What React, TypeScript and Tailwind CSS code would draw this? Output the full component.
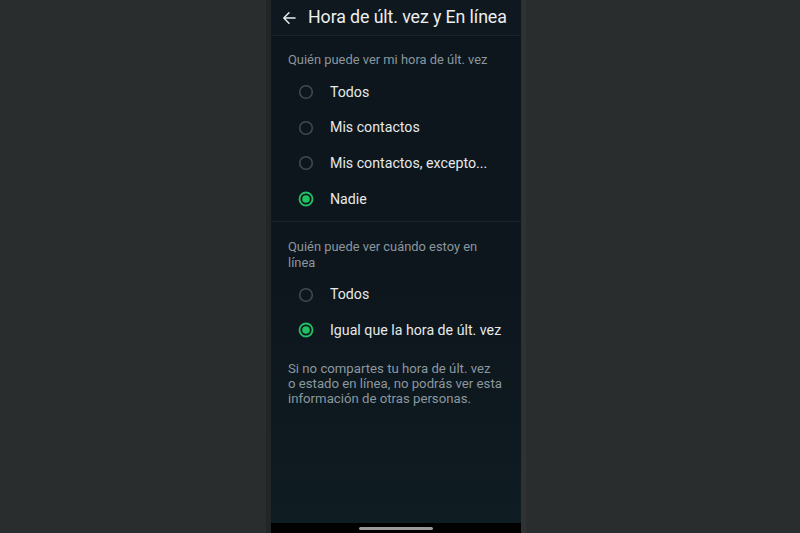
import React from "react";

type Opt = { label: string; checked?: boolean };

function Radio({ checked }: { checked?: boolean }) {
  return (
    <svg width="16" height="16" viewBox="0 0 16 16" className="shrink-0">
      {checked ? (
        <>
          <circle cx="8" cy="8" r="6.5" fill="none" stroke="#21c063" strokeWidth="1.8" />
          <circle cx="8" cy="8" r="3.8" fill="#21c063" />
        </>
      ) : (
        <circle cx="8" cy="8" r="6.3" fill="none" stroke="#3e4a51" strokeWidth="1.6" />
      )}
    </svg>
  );
}

function OptionRow({ label, checked }: Opt) {
  return (
    <div className="flex h-[35.7px] items-center">
      <div className="flex w-[59px] pl-[27px]">
        <Radio checked={checked} />
      </div>
      <span className="text-[14.2px] leading-none text-[#e6e9ea]">{label}</span>
    </div>
  );
}

export default function App() {
  const font = { fontFamily: "Roboto, 'Noto Sans', sans-serif" };
  const first: Opt[] = [
    { label: "Todos" },
    { label: "Mis contactos" },
    { label: "Mis contactos, excepto..." },
    { label: "Nadie", checked: true },
  ];
  const second: Opt[] = [
    { label: "Todos" },
    { label: "Igual que la hora de últ. vez", checked: true },
  ];

  return (
    <div className="flex h-[533px] w-[800px] bg-[#2a2d2e] pl-[266px]" style={font}>
      <div className="w-[5px] bg-[#232628]" />
      <div className="flex w-[250px] flex-col bg-[#0d161c]">
        {/* top bar */}
        <div className="flex h-[36px] items-center border-b border-[#1a242a] bg-[#0f181e]">
          <svg width="14" height="14" viewBox="0 0 14 14" className="ml-[11px]">
            <path
              d="M13 7H2M7 1.8L1.8 7L7 12.2"
              fill="none"
              stroke="#e8eaeb"
              strokeWidth="1.5"
              strokeLinecap="round"
              strokeLinejoin="round"
            />
          </svg>
          <span className="ml-[12px] -mt-[1px] text-[17.8px] leading-none tracking-[-0.1px] text-[#eceeef]">
            Hora de últ. vez y En línea
          </span>
        </div>

        {/* content */}
        <div className="flex flex-1 flex-col bg-gradient-to-b from-[#0d161c] via-[#0d161c] to-[#0f1c22]">
          <div className="border-b border-[#19232a] pb-[4px] pt-[16px]">
            <div className="px-[17px] text-[12.9px] leading-[16px] text-[#8b979e]">
              Quién puede ver mi hora de últ. vez
            </div>
            <div className="mt-[6px]">
              {first.map((o) => (
                <OptionRow key={o.label} {...o} />
              ))}
            </div>
          </div>

          <div className="pt-[17px]">
            <div className="pl-[17px] pr-[18px] text-[12.9px] leading-[16px] text-[#8b979e]">
              Quién puede ver cuándo estoy en línea
            </div>
            <div className="mt-[6px]">
              {second.map((o) => (
                <OptionRow key={o.label} {...o} />
              ))}
            </div>
          </div>

          <p className="mt-[13px] pl-[17px] pr-[6px] text-[13.2px] leading-[15px] text-[#8b979e]">
            Si no compartes tu hora de últ. vez
            <br />
            o estado en línea, no podrás ver esta
            <br />
            información de otras personas.
          </p>
        </div>

        {/* system nav bar */}
        <div className="flex h-[10px] items-center justify-center bg-black">
          <div className="h-[3px] w-[74px] rounded-full bg-[#9a9a9a]" />
        </div>
      </div>
      <div className="w-[5px] bg-[#2f3233]" />
    </div>
  );
}
